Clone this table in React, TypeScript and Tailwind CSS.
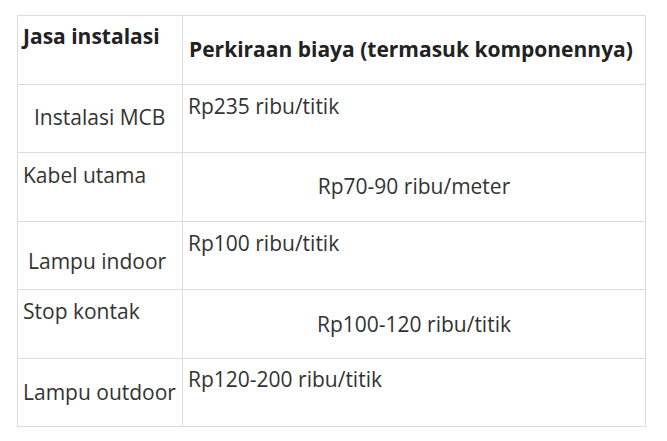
const rows = [
  {
    h: "h-[68px]",
    left: { text: "Instalasi MCB", cls: "pt-[18px] pl-[16px]" },
    right: { text: "Rp235 ribu/titik", cls: "pt-[7px] pl-[5px]" },
  },
  {
    h: "h-[69px]",
    left: { text: "Kabel utama", cls: "pt-[8px] pl-[5px]" },
    right: { text: "Rp70-90 ribu/meter", cls: "pt-[19px] text-center" },
  },
  {
    h: "h-[68px]",
    left: { text: "Lampu indoor", cls: "pt-[25px] pl-[10px]" },
    right: { text: "Rp100 ribu/titik", cls: "pt-[7px] pl-[5px]" },
  },
  {
    h: "h-[69px]",
    left: { text: "Stop kontak", cls: "pt-[7px] pl-[5px]" },
    right: { text: "Rp100-120 ribu/titik", cls: "pt-[20px] text-center" },
  },
  {
    h: "h-[68px]",
    left: { text: "Lampu outdoor", cls: "pt-[19px] pl-[5px]" },
    right: { text: "Rp120-200 ribu/titik", cls: "pt-[6px] pl-[5px]" },
  },
];

export default function App() {
  return (
    <div className="h-[441px] w-[667px] bg-white pl-[17px] pt-[15px] font-['Open_Sans',sans-serif] text-[21px] leading-[28px]">
      <div className="grid w-[629px] grid-cols-[165px_463px] border-r border-b border-[#dcdcdc]">
        <div className="h-[69px] border-t border-l border-[#dcdcdc] pt-[6px] pl-[5px] font-bold text-[#222]">
          Jasa instalasi
        </div>
        <div className="h-[69px] border-t border-l border-[#dcdcdc] pt-[19px] pl-[6px] font-bold text-[#222]">
          Perkiraan biaya (termasuk komponennya)
        </div>
        {rows.map((r, i) => (
          <>
            <div
              key={"l" + i}
              className={`${r.h} border-t border-l border-[#dcdcdc] text-[#333] ${r.left.cls}`}
            >
              {r.left.text}
            </div>
            <div
              key={"r" + i}
              className={`${r.h} border-t border-l border-[#dcdcdc] text-[#333] ${r.right.cls}`}
            >
              {r.right.text}
            </div>
          </>
        ))}
      </div>
    </div>
  );
}
